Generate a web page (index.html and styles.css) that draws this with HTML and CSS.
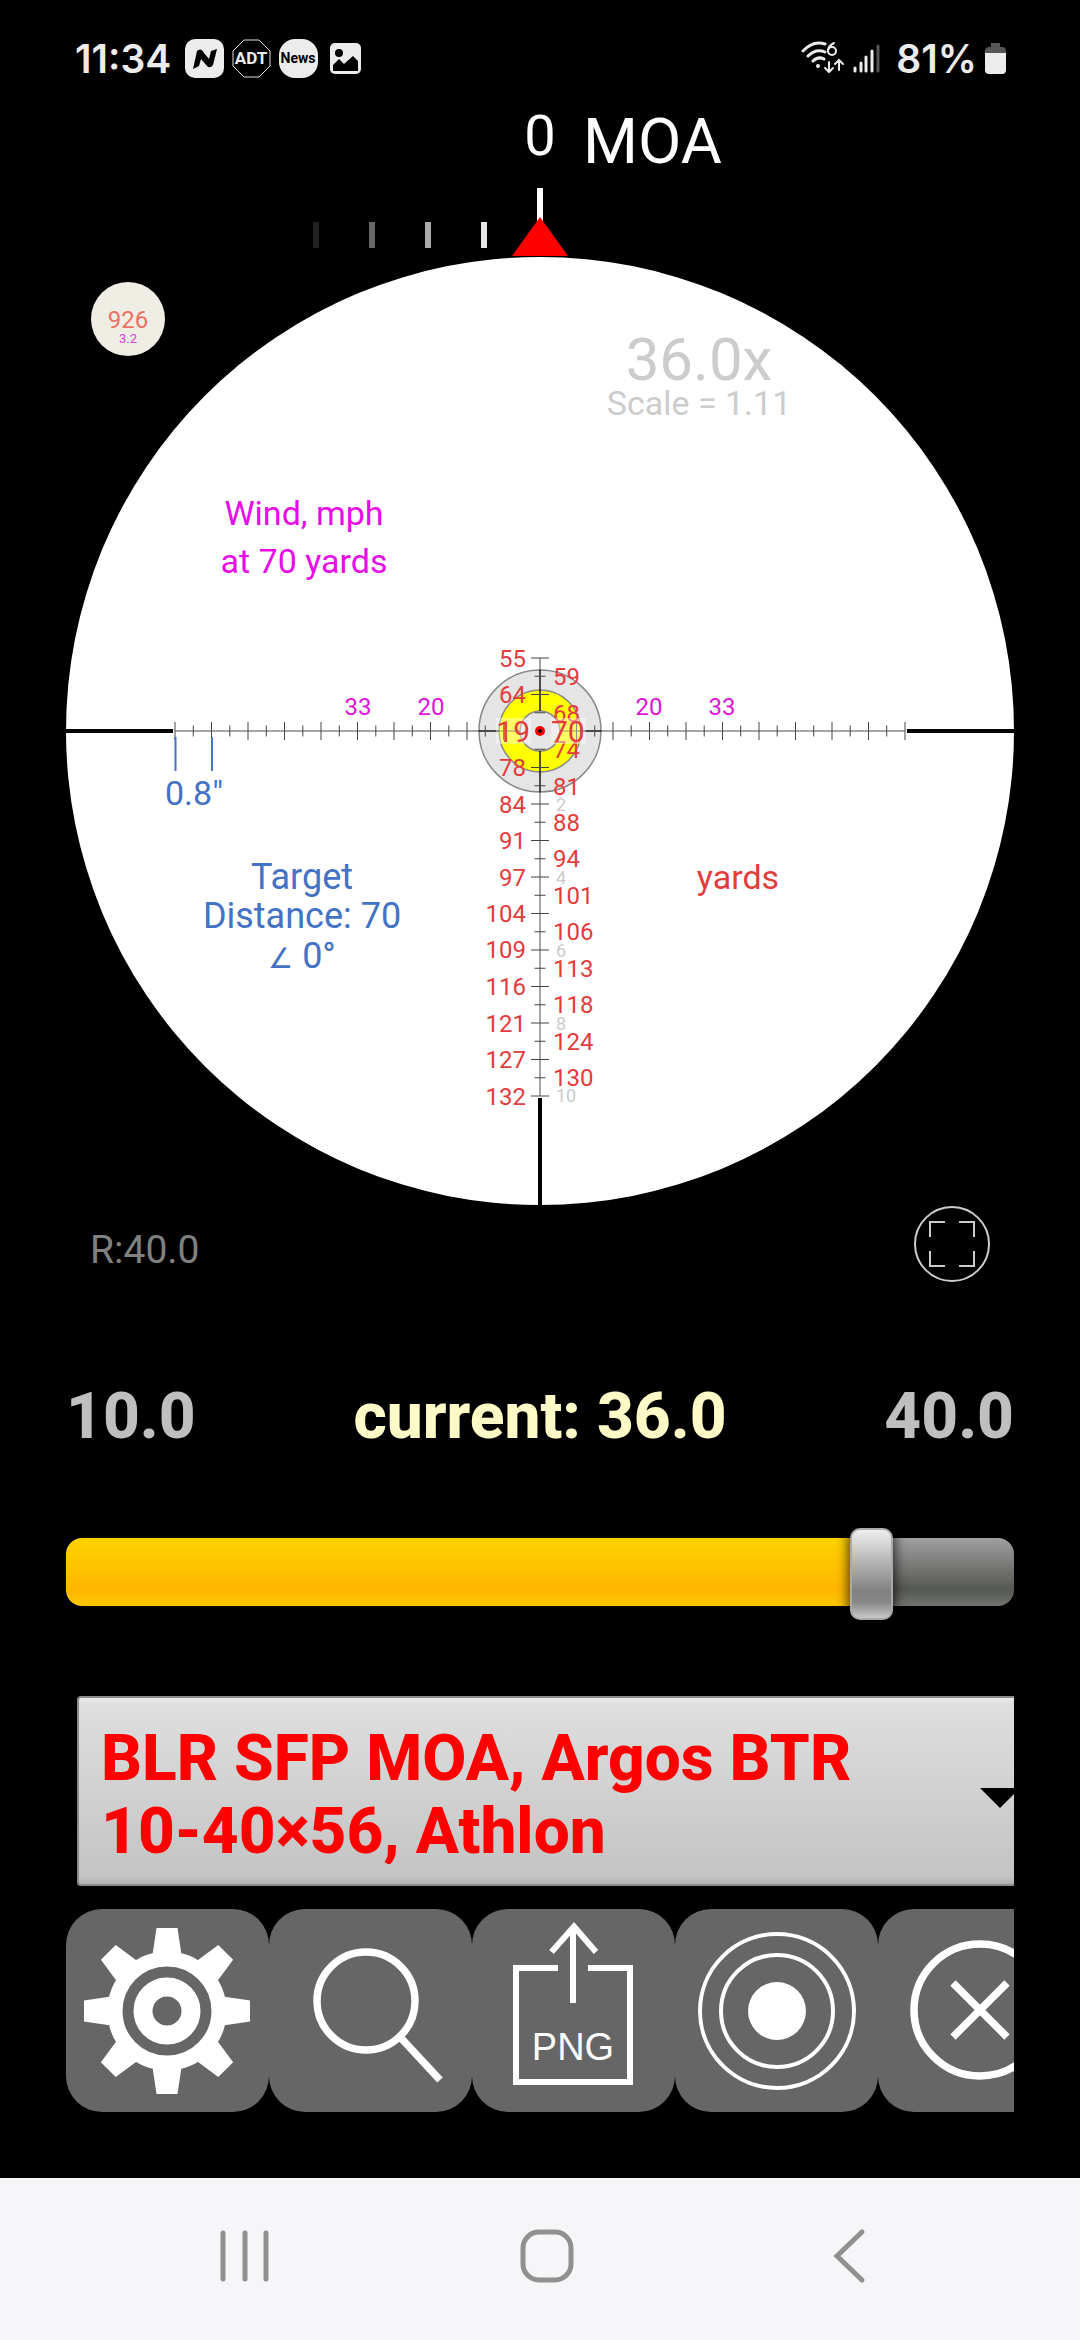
FILE: index.html
```
<!DOCTYPE html>
<html lang="en">

<head>
    <meta charset="UTF-8">
    <meta name="viewport" content="width=device-width, initial-scale=1.0">
    <title>Reticle</title>
    <link rel="stylesheet" href="styles.css">
</head>

<body>
    <header class="status">
        <div class="status-left">
            <span>11:34</span>
            <svg width="39" height="39" viewBox="0 0 39 39">
                <rect width="39" height="39" rx="10" fill="#ececec" />
                <path d="M8 30 L12 12 Q16 8 19 14 L24 20 L26 12 L32 10 L28 26 Q25 30 22 27 L16 20 L14 27 Z" fill="#000" />
            </svg>
            <svg width="39" height="39" viewBox="0 0 39 39">
                <path d="M12 1 H27 L38 12 V27 L27 38 H12 L1 27 V12 Z" fill="#000" stroke="#ddd" />
                <text class="adt" x="19" y="25" text-anchor="middle">ADT</text>
            </svg>
            <svg width="39" height="39" viewBox="0 0 39 39">
                <rect width="39" height="39" rx="16" fill="#ececec" />
                <text class="news" x="19" y="24" text-anchor="middle">News</text>
            </svg>
            <svg class="photo" width="31" height="31" viewBox="0 0 31 31">
                <rect width="31" height="31" rx="5" fill="#ececec" />
                <circle cx="9" cy="10" r="4" fill="#000" />
                <path d="M3 28 V22 L9 16 L14 21 L23 13 L28 18 V28 Z" fill="#000" />
            </svg>
        </div>
        <div class="status-right">
            <svg width="44" height="34" viewBox="0 0 44 34" fill="none" stroke="#ececec" stroke-width="3" stroke-linecap="round">
                <path d="M2 10 Q12 -1 24 3 M7 15 Q15 7 24 11 M12 20 Q17 15 23 18" />
                <path d="M33 2 Q27 5 27 10" stroke-width="2" />
                <circle cx="31" cy="10" r="4" stroke-width="2" />
                <circle cx="17" cy="25" r="2" fill="#ececec" stroke="none" />
                <path d="M28 21 V31 M24 27 L28 31 L32 27 M38 29 V19 M34 23 L38 19 L42 23" stroke-width="2" />
            </svg>
            <svg class="signal" width="27" height="29" viewBox="0 0 27 29" stroke="#ececec" stroke-width="3" stroke-linecap="round">
                <path d="M2 24 V27 M8 19 V27 M13 13 V27 M19 7 V27" />
                <path d="M25 2 V27" stroke="#555" />
            </svg>
            <span>81%</span>
            <svg width="21" height="31" viewBox="0 0 21 31">
                <path d="M6 0 H15 V4 H17 Q21 4 21 8 V12 H0 V8 Q0 4 4 4 H6 Z" fill="#555" />
                <path d="M0 10 H21 V27 Q21 31 17 31 H4 Q0 31 0 27 Z" fill="#ececec" />
            </svg>
        </div>
    </header>

    <main>
        <!-- origin is the reticle center, 36.5 units = 1 MOA -->
        <svg class="scope" viewBox="-474 -627 948 1102">
            <text class="turret" x="0" y="-576" text-anchor="middle">0</text>
            <text class="unit" x="43" y="-568">MOA</text>
            <g stroke-width="6">
                <path d="M-224 -509 V-483" stroke="#222" />
                <path d="M-168 -509 V-483" stroke="#666" />
                <path d="M-112 -509 V-483" stroke="#aaa" />
                <path d="M-56 -509 V-483" stroke="#e8e8e8" />
                <path d="M0 -543 V-505" stroke="#fff" />
            </g>
            <path d="M0 -514 L28 -475 H-28 Z" fill="#f00" />
            <circle r="474" fill="#fff" />

            <circle cx="-412" cy="-412" r="37" fill="#f0ede4" />
            <text class="badge-range" x="-412" y="-403" text-anchor="middle">926</text>
            <text class="badge-wind" x="-412" y="-388" text-anchor="middle">3.2</text>

            <g class="zoom" text-anchor="middle">
                <text class="zoom-value" x="159" y="-351">36.0x</text>
                <text x="159" y="-316">Scale = 1.11</text>
            </g>
            <g class="wind" text-anchor="middle">
                <text x="-236" y="-206">Wind, mph</text>
                <text x="-236" y="-158">at 70 yards</text>
            </g>

            <!-- target -->
            <g stroke="#888" stroke-width="1.5">
                <circle r="61" fill="#e5e5e5" />
                <circle r="41" fill="#ff0" />
                <circle r="20" fill="#e5e5e5" />
            </g>

            <!-- crosshair -->
            <path d="M-365 0 H-20 M20 0 H365 M0 -73 V-20 M0 20 V365" stroke="#000" stroke-opacity=".35" stroke-width="2" />
            <path d="M-61 0 H-41 M41 0 H61 M0 -61 V-20 M0 20 V61" stroke="#000" stroke-opacity=".5" stroke-width="2" />
            <g stroke="#444">
                <path d="M-365.5 0 H-30" stroke-width="18" stroke-dasharray="1 35.5" />
                <path d="M36 0 H366" stroke-width="18" stroke-dasharray="1 35.5" />
                <path d="M-347.2 0 H-30" stroke-width="11" stroke-dasharray="1 35.5" />
                <path d="M54.2 0 H366" stroke-width="11" stroke-dasharray="1 35.5" />
                <path d="M0 -73.5 V-30" stroke-width="18" stroke-dasharray="1 35.5" />
                <path d="M0 36 V366" stroke-width="18" stroke-dasharray="1 35.5" />
                <path d="M0 -55.2 V366" stroke-width="11" stroke-dasharray="1 35.5" />
            </g>
            <path d="M-474 0 H-367 M367 0 H474 M0 367 V474" stroke="#000" stroke-width="4" />

            <g class="wind-hold" text-anchor="middle">
                <text x="-182" y="-16">33</text>
                <text x="-109" y="-16">20</text>
                <text x="109" y="-16">20</text>
                <text x="182" y="-16">33</text>
            </g>

            <g class="moa">
                <text x="16" y="80">2</text>
                <text x="16" y="153">4</text>
                <text x="16" y="226">6</text>
                <text x="16" y="299">8</text>
                <text x="16" y="371">10</text>
            </g>
            <g class="range" text-anchor="end">
                <text x="-14" y="-64">55</text>
                <text x="-14" y="-28">64</text>
                <text x="-14" y="45">78</text>
                <text x="-14" y="82">84</text>
                <text x="-14" y="118">91</text>
                <text x="-14" y="155">97</text>
                <text x="-14" y="191">104</text>
                <text x="-14" y="227">109</text>
                <text x="-14" y="264">116</text>
                <text x="-14" y="301">121</text>
                <text x="-14" y="337">127</text>
                <text x="-14" y="374">132</text>
            </g>
            <g class="range">
                <text x="13" y="-46">59</text>
                <text x="13" y="-9">68</text>
                <text x="13" y="27">74</text>
                <text x="13" y="64">81</text>
                <text x="13" y="100">88</text>
                <text x="13" y="136">94</text>
                <text x="13" y="173">101</text>
                <text x="13" y="209">106</text>
                <text x="13" y="246">113</text>
                <text x="13" y="282">118</text>
                <text x="13" y="319">124</text>
                <text x="13" y="355">130</text>
            </g>
            <path d="M-44 -13 H-9 V13 H-44 Z M11 -13 H46 V13 H11 Z" fill="#fff" fill-opacity=".4" />
            <text class="range-main" x="-10" y="11" text-anchor="end">19</text>
            <text class="range-main" x="11" y="11">70</text>
            <circle r="5" fill="#f00" />
            <circle r="2" fill="#000" />

            <path d="M-364.5 6 V40 M-328 6 V40" stroke="#4472c4" stroke-width="2" />
            <g class="info" text-anchor="middle">
                <text class="info-gap" x="-346" y="74">0.8"</text>
                <text x="-238" y="158">Target</text>
                <text x="-238" y="197">Distance: 70</text>
                <text x="-238" y="237"><tspan class="angle">∠</tspan> 0°</text>
            </g>
            <text class="units" x="198" y="158" text-anchor="middle">yards</text>
        </svg>

        <div class="scope-foot">
            <span class="r-max">R:40.0</span>
            <button class="full" aria-label="Full screen">
                <svg width="76" height="76" viewBox="0 0 76 76" fill="none" stroke="#ccc" stroke-width="2">
                    <circle cx="38" cy="38" r="37" />
                    <path d="M16 31 V16 H31 M45 16 H60 V31 M60 45 V60 H45 M31 60 H16 V45" />
                </svg>
            </button>
        </div>

        <div class="limits">
            <span>10.0</span>
            <label class="current" for="power">current: 36.0</label>
            <span>40.0</span>
        </div>
        <input class="power" id="power" type="range" min="10" max="40" step="0.1" value="36">

        <div class="picker">
            <select class="reticle" aria-label="Reticle">
                <option>BLR SFP MOA, Argos BTR 10-40×56, Athlon</option>
            </select>
        </div>

        <div class="tools">
            <button aria-label="Settings">
                <svg viewBox="0 0 203 203">
                    <g transform="translate(101 102)">
                        <g fill="#fff">
                            <path id="tooth" d="M-10.5 -83 H10.5 L14.5 -56 H-14.5 Z M-14.5 56 H14.5 L10.5 83 H-10.5 Z" />
                            <use href="#tooth" transform="rotate(45)" />
                            <use href="#tooth" transform="rotate(90)" />
                            <use href="#tooth" transform="rotate(135)" />
                        </g>
                        <circle r="52" fill="none" stroke="#fff" stroke-width="15" />
                        <circle r="24" fill="none" stroke="#fff" stroke-width="19" />
                    </g>
                </svg>
            </button>
            <button aria-label="Search">
                <svg viewBox="0 0 203 203" fill="none" stroke="#fff" stroke-width="7.5">
                    <circle cx="97" cy="92" r="49" />
                    <path d="M132 129 L171 171" />
                </svg>
            </button>
            <button aria-label="Export PNG">
                <svg viewBox="0 0 203 203" fill="none" stroke="#fff" stroke-width="6">
                    <path d="M86 59 H44 V173 H158 V59 H116 M101 94 V18 M79.500 43 L102 17.500 L124 43" />
                    <text class="png" x="101" y="151" text-anchor="middle">PNG</text>
                </svg>
            </button>
            <button aria-label="Target">
                <svg viewBox="0 0 203 203" fill="none" stroke="#fff" stroke-width="4">
                    <circle cx="102" cy="102" r="77" />
                    <circle cx="102" cy="102" r="56" />
                    <circle cx="102" cy="102" r="29" fill="#fff" stroke="none" />
                </svg>
            </button>
            <button aria-label="Close">
                <svg viewBox="0 0 203 203" fill="none" stroke="#fff" stroke-width="7.5">
                    <circle cx="102" cy="101" r="66" />
                    <path d="M75 74 L129 128 M129 74 L75 128" />
                </svg>
            </button>
        </div>
    </main>

    <nav class="nav">
        <button aria-label="Recents">
            <svg width="56" height="56" viewBox="0 0 56 56">
                <path d="M6 5 V51 M28 5 V51 M49 5 V51" />
            </svg>
        </button>
        <button aria-label="Home">
            <svg width="56" height="56" viewBox="0 0 56 56">
                <rect x="4" y="4" width="48" height="48" rx="16" />
            </svg>
        </button>
        <button aria-label="Back">
            <svg width="56" height="56" viewBox="0 0 56 56">
                <path d="M41 4 L16 28 L41 52" />
            </svg>
        </button>
    </nav>
</body>

</html>
```
FILE: styles.css
```
* {
    box-sizing: border-box;
}

body {
    margin: 0;
    min-height: 100vh;
    display: flex;
    flex-direction: column;
    background: #000;
    color: #fff;
    font-family: Roboto, sans-serif;
}

button {
    margin: 0;
    padding: 0;
    border: none;
    background: none;
    cursor: pointer;
}

svg {
    display: block;
}

/* status bar */
.status {
    height: 104px;
    padding: 12px 74px 0 75px;
    display: flex;
    justify-content: space-between;
    align-items: center;
    color: #ececec;
    font-family: Inter, sans-serif;
    font-size: 39px;
    font-weight: 600;
}

.status-left,
.status-right {
    display: flex;
    align-items: center;
    gap: 8px;
}

.status-left span {
    margin-right: 6px;
}

.photo {
    margin-left: 4px;
}

.signal {
    margin-right: 8px;
}

.adt {
    font-family: Roboto, sans-serif;
    font-size: 17px;
    font-weight: 700;
    fill: #ececec;
}

.news {
    font-family: Roboto, sans-serif;
    font-size: 14px;
    font-weight: 700;
    fill: #000;
}

main {
    padding: 0 66px;
}

/* scope */
.scope {
    width: 100%;
}

.turret {
    font-size: 56px;
    fill: #fff;
}

.unit {
    font-size: 63px;
    fill: #fff;
}

.badge-range {
    font-size: 24px;
    fill: #ec7068;
}

.badge-wind {
    font-size: 13px;
    fill: #d444dc;
}

.zoom {
    font-size: 34px;
    fill: #ccc;
}

.zoom-value {
    font-size: 60px;
}

.wind {
    font-size: 34px;
    fill: #e80ce8;
}

.wind-hold {
    font-size: 24px;
    fill: #dc14dc;
}

.moa {
    font-size: 18px;
    fill: #ccc;
}

.range {
    font-size: 24px;
    fill: #e23c3c;
}

.range-main {
    font-size: 30px;
    fill: #e23c3c;
}

.info {
    font-size: 36px;
    fill: #4472c4;
}

.info-gap {
    font-size: 34px;
}

.angle {
    font-size: 28px;
}

.units {
    font-size: 34px;
    fill: #e23c3c;
}

.scope-foot {
    padding: 0 24px;
    display: flex;
    justify-content: space-between;
    align-items: center;
}

.r-max {
    padding-top: 12px;
    font-size: 39px;
    color: #808080;
}

/* magnification */
.limits {
    margin-top: 97px;
    display: flex;
    justify-content: space-between;
    font-size: 64px;
    line-height: 76px;
    font-weight: 800;
    color: #bfbfbf;
}

.current {
    color: #fdfac8;
}

.power {
    display: block;
    width: 100%;
    height: 92px;
    margin: 73px 0 0;
    background: none;
    -webkit-appearance: none;
    appearance: none;
}

.power::-webkit-slider-runnable-track {
    height: 68px;
    margin-top: -4px;
    border-radius: 16px;
    background:
        linear-gradient(#ffd200, #ffb600 76%, #ffc800) 0 0 / 85% 100% no-repeat,
        linear-gradient(#a0a0a0, #555752 76%, #72746f);
}

.power::-webkit-slider-thumb {
    -webkit-appearance: none;
    width: 43px;
    height: 92px;
    margin-top: -10px;
    border: 2px solid #aaa;
    border-radius: 10px;
    background: linear-gradient(#eee, #808080 70%, #888 82%, #c8c8c8);
    box-shadow: 0 0 12px 2px rgba(0, 0, 0, .7);
}

/* reticle list runs past the right edge */
.picker {
    position: relative;
    margin-top: 76px;
    padding-left: 11px;
    overflow: hidden;
}

.reticle {
    display: block;
    width: 105%;
    height: 190px;
    padding: 24px 140px 20px 22px;
    border: 2px solid #8c8c8c;
    border-radius: 4px;
    background: linear-gradient(#ebe8eb, #dedede 4%, #c4c4c4 96%, #b0b0b0);
    color: #f00;
    font-family: inherit;
    font-size: 64px;
    line-height: 73px;
    font-weight: 800;
    white-space: normal;
    -webkit-appearance: none;
    appearance: none;
}

.picker::after {
    content: "";
    position: absolute;
    right: -6px;
    top: 92px;
    border: 20px solid transparent;
    border-top-color: #000;
    border-bottom: none;
    pointer-events: none;
}

/* tools */
.tools {
    margin-top: 23px;
    display: flex;
    overflow: hidden;
}

.tools button {
    flex: none;
    width: 203px;
    height: 203px;
    border-radius: 36px;
    background: #666;
}

.png {
    font-family: "Liberation Sans", sans-serif;
    font-size: 38px;
    fill: #fff;
    stroke: none;
}

/* system navigation */
.nav {
    margin-top: auto;
    height: 162px;
    padding: 0 80px 6px 94px;
    display: grid;
    grid-template-columns: repeat(3, 1fr);
    background: #f6f6f9;
}

.nav button {
    display: flex;
    justify-content: center;
    align-items: center;
}

.nav svg {
    fill: none;
    stroke: #909090;
    stroke-width: 5px;
    stroke-linecap: round;
}
```
